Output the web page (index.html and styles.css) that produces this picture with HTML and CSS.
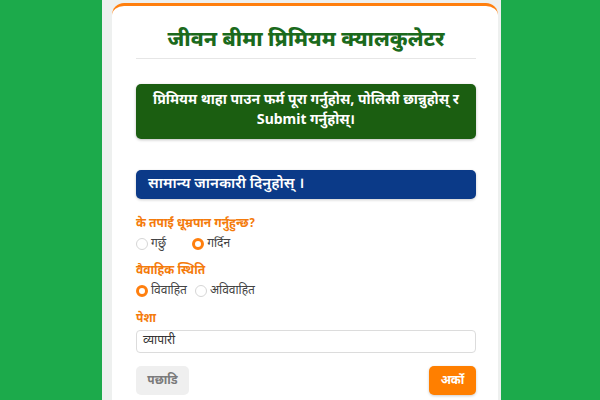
FILE: index.html
```html
<!DOCTYPE html>
<html lang="ne">
<head>
<meta charset="utf-8">
<link rel="stylesheet" href="styles.css">
</head>
<body>
<div class="page">
  <div class="card">
    <h1 class="title">जीवन बीमा प्रिमियम क्यालकुलेटर</h1>
    <div class="divider"></div>
    <div class="notice">प्रिमियम थाहा पाउन फर्म पूरा गर्नुहोस, पोलिसी छान्नुहोस् र Submit गर्नुहोस्।</div>
    <div class="section">सामान्य जानकारी दिनुहोस् ।</div>
    <div class="field">
      <div class="label">के तपाईं धूम्रपान गर्नुहुन्छ?</div>
      <div class="radios">
        <label class="radio"><span class="dot"></span>गर्छु</label>
        <label class="radio radio-wide"><span class="dot on"></span>गर्दिन</label>
      </div>
    </div>
    <div class="field">
      <div class="label">वैवाहिक स्थिति</div>
      <div class="radios">
        <label class="radio"><span class="dot on"></span>विवाहित</label>
        <label class="radio"><span class="dot"></span>अविवाहित</label>
      </div>
    </div>
    <div class="field field-last">
      <div class="label">पेशा</div>
      <div class="input">व्यापारी</div>
    </div>
    <div class="actions">
      <button class="btn btn-back">पछाडि</button>
      <button class="btn btn-next">अर्को</button>
    </div>
  </div>
</div>
</body>
</html>
```

FILE: styles.css
```css
html, body {
  margin: 0;
  padding: 0;
  height: 100%;
}
body {
  background: #1caa4b;
  font-family: "Noto Sans Devanagari", "Noto Sans", "Liberation Sans", sans-serif;
  overflow: hidden;
}
.page {
  margin-left: 102px;
  width: 389px;
  height: 400px;
  background: #eef0ef;
  padding: 3px 0 0 10px;
}
.card {
  width: 340px;
  height: 420px;
  background: #ffffff;
  border-top: 3px solid #ff7f0e;
  border-radius: 12px 12px 0 0;
  padding: 0 22px 0 24px;
}
.title {
  margin: 0;
  padding-top: 20px;
  text-align: center;
  color: #1b6a1c;
  font-size: 21px;
  font-weight: 800;
  line-height: 30px;
}
.divider {
  height: 1px;
  background: #e6e6e6;
  margin-top: 2px;
}
.notice {
  margin-top: 25px;
  background: #1b5e11;
  color: #fff;
  border-radius: 5px;
  box-shadow: 0 1px 3px rgba(0,0,0,0.25);
  text-align: center;
  font-weight: 700;
  font-size: 14px;
  line-height: 20px;
  padding: 7px 12px 8px;
}
.section {
  margin-top: 31px;
  background: #0b3a88;
  color: #fff;
  border-radius: 5px;
  box-shadow: 0 1px 3px rgba(0,0,0,0.2);
  font-size: 15px;
  font-weight: 600;
  line-height: 20px;
  padding: 5px 12px 4px;
}
.field {
  margin-top: 17px;
}
.field + .field {
  margin-top: 10px;
}
.field + .field-last {
  margin-top: 11px;
}
.label {
  color: #f47b0c;
  font-weight: 700;
  font-size: 12px;
  line-height: 17px;
}
.radios {
  display: flex;
  gap: 8px;
  margin-top: 2px;
}
.radio {
  display: flex;
  align-items: center;
  gap: 3px;
  font-size: 12px;
  color: #444;
  line-height: 18px;
}
.radio-wide {
  margin-left: 18px;
}
.dot {
  width: 12px;
  height: 12px;
  box-sizing: border-box;
  border-radius: 50%;
  border: 1px solid #d6d6d6;
  background: #fff;
}
.dot.on {
  border: 3.5px solid #ff7f0e;
}
.input {
  margin-top: 2px;
  height: 21px;
  border: 1px solid #dcdcdc;
  border-radius: 4px;
  font-size: 12px;
  color: #333;
  line-height: 21px;
  padding: 0 6px;
}
.actions {
  display: flex;
  justify-content: space-between;
  margin-top: 13px;
}
.btn {
  border: none;
  border-radius: 5px;
  font-family: inherit;
  font-size: 12px;
  font-weight: 700;
  height: 29px;
}
.btn-back {
  background: #efefef;
  color: #7a7a7a;
  width: 53px;
}
.btn-next {
  background: #ff7f00;
  color: #fff;
  width: 47px;
  box-shadow: 0 1px 3px rgba(0,0,0,0.2);
}
```
